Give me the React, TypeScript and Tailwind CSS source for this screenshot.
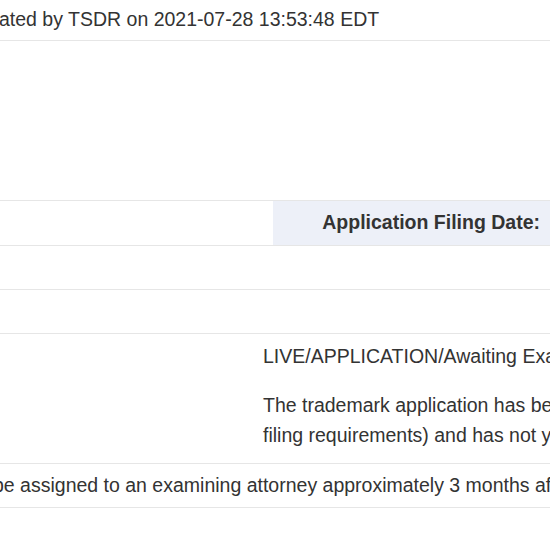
const rowLine = "border-b border-[#e6e6e6]";

export default function App() {
  return (
    <div className="w-[550px] h-[550px] overflow-hidden bg-white text-[#333] font-['Liberation_Sans',Arial,sans-serif] text-[19.5px]">
      <div className={`h-[41px] flex items-center whitespace-nowrap -ml-[1px] ${rowLine}`}>
        ated by TSDR on 2021-07-28 13:53:48 EDT
      </div>

      <div className={`h-[160px] ${rowLine}`} />

      <div className={`h-[45px] flex ${rowLine}`}>
        <div className="w-[273px] shrink-0" />
        <div className="flex-1 bg-[#edf0f8] flex items-center justify-end pr-[10px] font-bold whitespace-nowrap">
          Application Filing Date:
        </div>
      </div>

      <div className={`h-[44px] ${rowLine}`} />
      <div className={`h-[44px] ${rowLine}`} />

      <div className={`h-[130px] flex ${rowLine}`}>
        <div className="w-[263px] shrink-0" />
        <div className="w-[760px] shrink-0 pt-[10px]">
          <p className="whitespace-nowrap leading-[24px]">LIVE/APPLICATION/Awaiting Examination</p>
          <p className="mt-[22px] leading-[30px] whitespace-nowrap">
            The trademark application has been accepted by the Office (has met the minimum
            <br />
            filing requirements) and has not yet been assigned to an examining attorney.
          </p>
        </div>
      </div>

      <div className={`h-[44px] flex items-center whitespace-nowrap -ml-[7px] ${rowLine}`}>
        be assigned to an examining attorney approximately 3 months after filing date.
      </div>
    </div>
  );
}
